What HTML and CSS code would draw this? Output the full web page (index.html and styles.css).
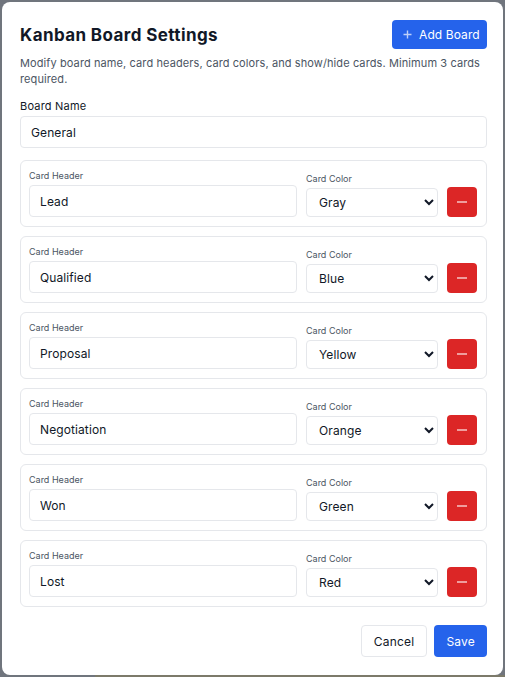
FILE: index.html
```html
<!DOCTYPE html>
<html lang="en">
<head>
<meta charset="utf-8">
<title>Kanban Board Settings</title>
<link rel="stylesheet" href="styles.css">
</head>
<body>
<div class="backdrop">
  <div class="modal">
    <div class="modal-header">
      <h1 class="title">Kanban Board Settings</h1>
      <button class="btn btn-primary btn-add" type="button">
        <svg class="plus" width="9" height="9" viewBox="0 0 9 9"><path d="M4.5 0.5v8M0.5 4.5h8" stroke="currentColor" stroke-width="1.4" fill="none"/></svg>
        <span>Add Board</span>
      </button>
    </div>
    <p class="desc">Modify board name, card headers, card colors, and show/hide cards. Minimum 3 cards required.</p>

    <label class="field-label">Board Name</label>
    <input class="input" type="text" value="General">

    <div class="cards">
      <div class="card">
        <div class="col-header"><label class="small-label">Card Header</label><input class="input" type="text" value="Lead"></div>
        <div class="col-color"><label class="small-label">Card Color</label><select class="select"><option>Gray</option></select></div>
        <button class="btn-remove" type="button"><span class="minus"></span></button>
      </div>
      <div class="card">
        <div class="col-header"><label class="small-label">Card Header</label><input class="input" type="text" value="Qualified"></div>
        <div class="col-color"><label class="small-label">Card Color</label><select class="select"><option>Blue</option></select></div>
        <button class="btn-remove" type="button"><span class="minus"></span></button>
      </div>
      <div class="card">
        <div class="col-header"><label class="small-label">Card Header</label><input class="input" type="text" value="Proposal"></div>
        <div class="col-color"><label class="small-label">Card Color</label><select class="select"><option>Yellow</option></select></div>
        <button class="btn-remove" type="button"><span class="minus"></span></button>
      </div>
      <div class="card">
        <div class="col-header"><label class="small-label">Card Header</label><input class="input" type="text" value="Negotiation"></div>
        <div class="col-color"><label class="small-label">Card Color</label><select class="select"><option>Orange</option></select></div>
        <button class="btn-remove" type="button"><span class="minus"></span></button>
      </div>
      <div class="card">
        <div class="col-header"><label class="small-label">Card Header</label><input class="input" type="text" value="Won"></div>
        <div class="col-color"><label class="small-label">Card Color</label><select class="select"><option>Green</option></select></div>
        <button class="btn-remove" type="button"><span class="minus"></span></button>
      </div>
      <div class="card">
        <div class="col-header"><label class="small-label">Card Header</label><input class="input" type="text" value="Lost"></div>
        <div class="col-color"><label class="small-label">Card Color</label><select class="select"><option>Red</option></select></div>
        <button class="btn-remove" type="button"><span class="minus"></span></button>
      </div>
    </div>

    <div class="footer">
      <button class="btn btn-outline" type="button">Cancel</button>
      <button class="btn btn-primary" type="button">Save</button>
    </div>
  </div>
</div>
</body>
</html>
```
FILE: styles.css
```css
* { box-sizing: border-box; }
html, body { margin: 0; padding: 0; }
body {
  width: 505px;
  height: 677px;
  overflow: hidden;
  background: linear-gradient(to right, #70757d 0, #70757d 95px, #7c7a6a 95px, #7c7a6a 100%);
  font-family: Inter, "Noto Sans", "Liberation Sans", sans-serif;
  color: #111827;
}
.backdrop {
  padding: 2px 2px 2px 2px;
  background: #70757d;
  height: 675px;
}
.modal {
  width: 501px;
  height: 673px;
  background: #fff;
  border-radius: 8px;
  padding: 18px 16px 18px 18px;
  display: flex;
  flex-direction: column;
}
.modal-header {
  display: flex;
  justify-content: space-between;
  align-items: center;
  height: 29px;
}
.title {
  margin: 0;
  font-size: 17px;
  font-weight: 700;
  color: #111827;
  letter-spacing: 0.4px;
}
.btn {
  font-family: inherit;
  font-size: 12px;
  letter-spacing: 0.2px;
  border-radius: 4px;
  height: 32px;
  padding: 0 12px;
  cursor: pointer;
  white-space: nowrap;
}
.btn-primary {
  background: #2563eb;
  color: #fff;
  border: none;
}
.btn-outline {
  background: #fff;
  color: #111827;
  border: 1px solid #e5e7eb;
}
.btn-add {
  height: 29px;
  width: 95px;
  padding: 0 0 0 11px;
  display: flex;
  align-items: center;
  gap: 7px;
  letter-spacing: 0.1px;
}
.plus { color: rgba(255, 255, 255, 0.7); flex: none; }
.desc {
  margin: 6px 0 0;
  font-size: 11px;
  line-height: 16px;
  letter-spacing: 0.1px;
  color: #4b5563;
}
.field-label {
  display: block;
  margin-top: 11px;
  font-size: 11px;
  line-height: 16px;
  font-weight: 400;
  letter-spacing: 0.2px;
  color: #111827;
}
.input {
  display: block;
  width: 100%;
  height: 32px;
  margin-top: 2px;
  border: 1px solid #e5e7eb;
  border-radius: 4px;
  padding: 0 10px;
  font-family: inherit;
  font-size: 12px;
  letter-spacing: 0.1px;
  color: #111827;
  background: #fff;
  outline: none;
}
.cards {
  margin-top: 12px;
  display: flex;
  flex-direction: column;
  gap: 9px;
}
.card {
  border: 1px solid #e5e7eb;
  border-radius: 6px;
  padding: 8px 8px 9px;
  display: flex;
  align-items: flex-end;
  gap: 9px;
}
.col-header { width: 268px; }
.col-color { width: 132px; }
.small-label {
  display: block;
  font-size: 9px;
  line-height: 14px;
  color: #4b5563;
}
.select {
  display: block;
  width: 132px;
  height: 29px;
  margin-top: 2px;
  border: 1px solid #e5e7eb;
  border-radius: 4px;
  padding: 0 4px 0 8px;
  font-family: inherit;
  font-size: 12px;
  letter-spacing: 0.1px;
  color: #111827;
  background: #fff;
  outline: none;
}
.btn-remove {
  width: 30px;
  height: 30px;
  flex: none;
  border: none;
  border-radius: 4px;
  background: #dc2626;
  display: flex;
  align-items: center;
  justify-content: center;
  padding: 0;
  cursor: pointer;
}
.minus {
  display: block;
  width: 10px;
  height: 2px;
  background: rgba(255, 255, 255, 0.55);
}
.footer {
  margin-top: auto;
  display: flex;
  justify-content: flex-end;
  gap: 7px;
}
```
